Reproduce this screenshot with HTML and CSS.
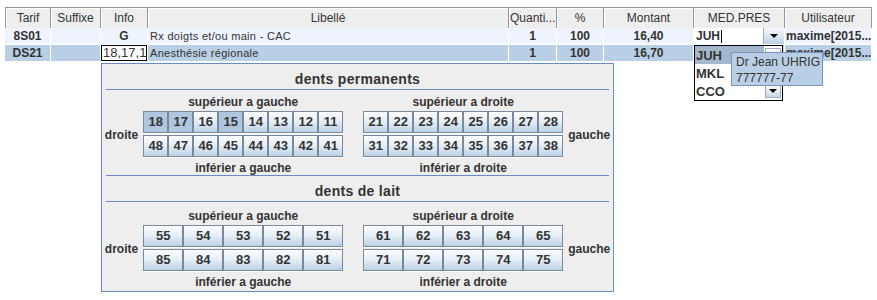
FILE: index.html
```html
<!DOCTYPE html>
<html>

<head>
	<meta charset='utf-8'>
	<title>Actes</title>
	<link rel="stylesheet" href="styles.css">
</head>

<body>
	<div class="sheet">
		<table class="acts">
			<colgroup>
				<col style="width: 46px">
				<col style="width: 50px">
				<col style="width: 47px">
				<col style="width: 361px">
				<col style="width: 48px">
				<col style="width: 47px">
				<col style="width: 90px">
				<col style="width: 91px">
				<col style="width: 87px">
			</colgroup>
			<thead>
				<tr>
					<th>Tarif</th>
					<th>Suffixe</th>
					<th>Info</th>
					<th>Libellé</th>
					<th>Quanti...</th>
					<th>%</th>
					<th>Montant</th>
					<th>MED.PRES</th>
					<th>Utilisateur</th>
				</tr>
			</thead>
			<tbody>
				<tr>
					<td class="bold">8S01</td>
					<td></td>
					<td class="bold">G</td>
					<td class="label">Rx doigts et/ou main - CAC</td>
					<td class="bold">1</td>
					<td class="bold">100</td>
					<td class="bold">16,40</td>
					<td class="editing">
						<div class="combo">
							<span class="combo-field">JUH<i class="caret"></i></span>
							<span class="combo-btn"><i class="arrow"></i></span>
						</div>
					</td>
					<td class="bold left">maxime[2015...</td>
				</tr>
				<tr class="selected">
					<td class="bold">DS21</td>
					<td></td>
					<td class="editing"><span class="info-field">18,17,1</span></td>
					<td class="label">Anesthésie régionale</td>
					<td class="bold">1</td>
					<td class="bold">100</td>
					<td class="bold">16,70</td>
					<td></td>
					<td class="bold left">maxime[2015...</td>
				</tr>
			</tbody>
		</table>

		<!-- tooth picker popup -->
		<div class="teeth">
			<section class="jaw">
				<h2 class="jaw-title">dents permanents</h2>
				<div class="jaw-body">
					<div class="side">
						<span class="side-label">droite</span>
						<div class="quad">
							<div class="quad-label">supérieur a gauche</div>
							<div class="keys keys-8">
								<button class="on">18</button><button class="on">17</button><button>16</button><button class="on">15</button><button>14</button><button>13</button><button>12</button><button>11</button>
								<button>48</button><button>47</button><button>46</button><button>45</button><button>44</button><button>43</button><button>42</button><button>41</button>
							</div>
							<div class="quad-label">inférier a gauche</div>
						</div>
					</div>
					<div class="side">
						<div class="quad">
							<div class="quad-label">supérieur a droite</div>
							<div class="keys keys-8">
								<button>21</button><button>22</button><button>23</button><button>24</button><button>25</button><button>26</button><button>27</button><button>28</button>
								<button>31</button><button>32</button><button>33</button><button>34</button><button>35</button><button>36</button><button>37</button><button>38</button>
							</div>
							<div class="quad-label">inférier a droite</div>
						</div>
						<span class="side-label">gauche</span>
					</div>
				</div>
			</section>
			<section class="jaw">
				<h2 class="jaw-title">dents de lait</h2>
				<div class="jaw-body">
					<div class="side">
						<span class="side-label">droite</span>
						<div class="quad">
							<div class="quad-label">supérieur a gauche</div>
							<div class="keys keys-5">
								<button>55</button><button>54</button><button>53</button><button>52</button><button>51</button>
								<button>85</button><button>84</button><button>83</button><button>82</button><button>81</button>
							</div>
							<div class="quad-label">inférier a gauche</div>
						</div>
					</div>
					<div class="side">
						<div class="quad">
							<div class="quad-label">supérieur a droite</div>
							<div class="keys keys-5">
								<button>61</button><button>62</button><button>63</button><button>64</button><button>65</button>
								<button>71</button><button>72</button><button>73</button><button>74</button><button>75</button>
							</div>
							<div class="quad-label">inférier a droite</div>
						</div>
						<span class="side-label">gauche</span>
					</div>
				</div>
			</section>
		</div>

		<!-- MED.PRES dropdown -->
		<ul class="dropdown">
			<li class="current"><span>JUH</span><i class="mini-btn"><i class="arrow"></i></i></li>
			<li><span>MKL</span><i class="mini-btn"><i class="arrow"></i></i></li>
			<li><span>CCO</span><i class="mini-btn"><i class="arrow"></i></i></li>
		</ul>

		<div class="tooltip">Dr Jean UHRIG<br>777777-77</div>
	</div>
</body>

</html>
```

FILE: styles.css
```css
:root {
	--text: #333333;
	--grid-line: #8c99a6;
	--metal: #7a8a99;
	--select: #b8cfe5;
	--focus: #6b8bc6;
}

* {
	box-sizing: border-box;
}

body {
	margin: 0;
	background: white;
	color: var(--text);
	font-family: "Liberation Sans", Arial, sans-serif;
	font-size: 12px;
}

.sheet {
	position: relative;
	padding: 7px 5px 0 5px;
	height: 300px;
}

/* table */

.acts {
	table-layout: fixed;
	width: 867px;
	border-collapse: separate;
	border-spacing: 0;
}

.acts th {
	height: 21px;
	padding: 0 1px;
	background: #eeeeee;
	border-top: 1px solid var(--grid-line);
	border-right: 1px solid var(--grid-line);
	box-shadow: inset 1px 1px 0 white;
	font-weight: normal;
	text-align: center;
	white-space: nowrap;
	overflow: hidden;
}

.acts th:first-child {
	border-left: 1px solid var(--grid-line);
}

.acts td {
	height: 17px;
	padding: 0 2px;
	border-right: 1px solid white;
	border-bottom: 1px solid white;
	background: #eef3fd;
	text-align: center;
	white-space: nowrap;
	overflow: hidden;
}

.acts .selected td {
	background: var(--select);
}

.acts td.bold {
	font-weight: bold;
}

.acts td.left {
	text-align: left;
	padding-left: 1px;
}

.acts td.label {
	text-align: left;
	font-size: 11px;
	letter-spacing: 0.3px;
}

.acts td.editing {
	padding: 0;
}

.combo {
	display: flex;
	height: 16px;
}

.combo-field {
	flex: 1;
	display: flex;
	align-items: center;
	padding-left: 2px;
	background: white;
	font-weight: bold;
}

.caret {
	width: 1px;
	height: 13px;
	margin-left: 1px;
	background: black;
}

.combo-btn {
	width: 21px;
	display: flex;
	align-items: center;
	justify-content: center;
	background: linear-gradient(#f4f7fb, #dfe8f2 50%, #bdd0e4);
	border-left: 1px solid #a0acb8;
}

.arrow {
	width: 0;
	height: 0;
	border-left: 4px solid transparent;
	border-right: 4px solid transparent;
	border-top: 4px solid black;
}

.info-field {
	display: block;
	height: 16px;
	padding-left: 1px;
	background: white;
	border: 1px solid black;
	font-size: 13px;
	line-height: 14px;
	text-align: left;
	overflow: hidden;
}

/* tooth popup */

.teeth {
	position: absolute;
	left: 101px;
	top: 63px;
	width: 513px;
	height: 229px;
	padding: 0 4px;
	background: #eeeeee;
	border: 1px solid var(--focus);
	display: flex;
	flex-direction: column;
}

.jaw-title {
	margin: 0;
	padding: 7px 0 2px;
	border-bottom: 1px solid var(--focus);
	font-size: 14px;
	line-height: 16px;
	text-align: center;
	letter-spacing: 0.3px;
}

.jaw-body {
	display: flex;
	justify-content: center;
	gap: 20px;
	padding: 5px 0 0;
	height: 86px;
}

.jaw:first-child .jaw-body {
	border-bottom: 1px solid var(--focus);
}

.jaw:last-child .jaw-body {
	padding-top: 4px;
	height: 90px;
}

.side {
	display: flex;
	align-items: center;
	gap: 5px;
}

.side-label,
.quad-label {
	font-weight: bold;
	line-height: 15px;
}

.quad-label {
	text-align: center;
}

.quad {
	display: flex;
	flex-direction: column;
	gap: 1px;
}

.quad .keys {
	margin-bottom: 3px;
}

.keys {
	display: grid;
	grid-auto-rows: 22px;
	row-gap: 2px;
}

.keys-8 {
	grid-template-columns: repeat(8, 25px);
}

.keys-5 {
	grid-template-columns: repeat(5, 40px);
}

.keys button {
	margin: 0;
	padding: 0;
	border: 1px solid var(--metal);
	background: linear-gradient(#fbfcfe, #e8eff7 45%, #bdd2e7);
	box-shadow: 0 1px 0 white;
	color: var(--text);
	font-family: inherit;
	font-size: 13px;
	font-weight: bold;
}

.keys button.on {
	background: #aec6de;
}

/* dropdown + tooltip */

.dropdown {
	position: absolute;
	left: 694px;
	top: 45px;
	width: 89px;
	margin: 0;
	padding: 0;
	list-style: none;
	background: white;
	border: 1px solid black;
}

.dropdown li {
	display: flex;
	align-items: center;
	height: 18px;
	font-weight: bold;
	font-size: 13px;
}

.dropdown li span {
	flex: 1;
	align-self: stretch;
	display: flex;
	align-items: center;
	padding-left: 1px;
}

.dropdown li.current span {
	background: #a3b8cc;
}

.mini-btn {
	width: 16px;
	height: 14px;
	margin: 0 1px;
	display: flex;
	align-items: center;
	justify-content: center;
	background: linear-gradient(#fbfcfe, #e6eef7 50%, #c3d6e9);
	border: 1px solid #a0acb8;
}

.tooltip {
	position: absolute;
	left: 731px;
	top: 52px;
	width: 92px;
	height: 34px;
	padding: 1px 0 0 4px;
	background: var(--select);
	border: 1px solid #7d93b8;
	line-height: 16px;
	white-space: nowrap;
}
```
